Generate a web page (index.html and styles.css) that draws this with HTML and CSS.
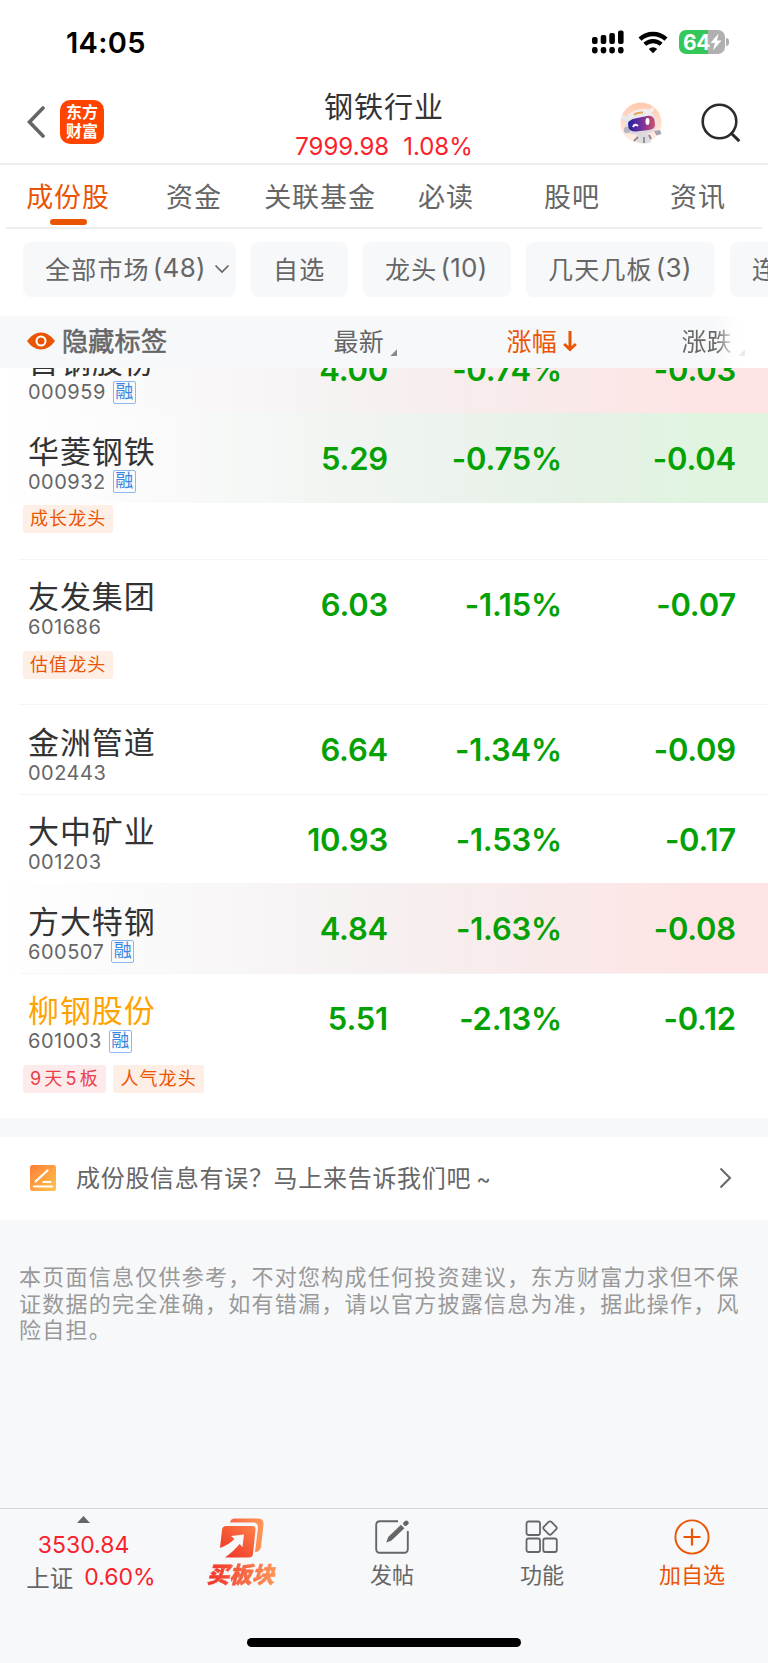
FILE: index.html
```
<!DOCTYPE html>
<html lang="zh-CN">
<head>
  <meta charset="UTF-8" />
  <meta name="viewport" content="width=device-width, initial-scale=1.0" />
  <title>钢铁行业</title>
  <link rel="stylesheet" href="styles.css">
</head>
<body>
  <div class="statusbar">
    <span class="clock">14:05</span>
    <div class="status-icons">
      <svg width="32" height="24" viewBox="0 0 32 24">
        <rect x="0" y="7" width="5.6" height="7" rx="2" />
        <rect x="8.7" y="5" width="5.6" height="9" rx="2" />
        <rect x="17.3" y="3" width="5.6" height="11" rx="2" />
        <rect x="26" y="0.5" width="5.6" height="13.5" rx="2" />
        <rect x="0" y="17" width="5.6" height="6.4" rx="2.4" />
        <rect x="8.7" y="17" width="5.6" height="6.4" rx="2.4" />
        <rect x="17.3" y="17" width="5.6" height="6.4" rx="2.4" />
        <rect x="26" y="17" width="5.6" height="6.4" rx="2.4" />
      </svg>
      <svg class="wifi" width="30" height="23" viewBox="0 0 30 23">
        <path d="M2 8.2a19 19 0 0 1 26 0" fill="none" stroke="#000" stroke-width="4.4" />
        <path d="M6.8 13.3a12 12 0 0 1 16.4 0" fill="none" stroke="#000" stroke-width="4.2" />
        <path d="M15 22.3l-4.2-4.4a6 6 0 0 1 8.4 0z" />
      </svg>
      <div class="battery">
        <span>64</span>
        <svg width="12" height="18" viewBox="0 0 12 18"><path d="M8.6 0.5L0.5 10h4.4L3 17.5 11.5 7.6H7z" fill="#fff" /></svg>
      </div>
      <i class="battery-tip"></i>
    </div>
  </div>

  <header class="navbar">
    <div class="nav-left">
      <svg width="18" height="32" viewBox="0 0 18 32"><path d="M16 2L2.5 16 16 30" fill="none" stroke="#666" stroke-width="3.6" stroke-linecap="round" /></svg>
      <div class="logo">东方<br>财富</div>
    </div>
    <div class="nav-title">
      <h1>钢铁行业</h1>
      <p><span>7999.98</span><span>1.08%</span></p>
    </div>
    <div class="nav-right">
      <svg width="42" height="42" viewBox="0 0 42 42">
        <defs>
          <linearGradient id="visor" x1="0" x2="1"><stop offset="0" stop-color="#2320a0" /><stop offset=".5" stop-color="#75309c" /><stop offset="1" stop-color="#d0506c" /></linearGradient>
          <linearGradient id="halo" x1="0" x2="0" y1="0" y2="1"><stop offset="0" stop-color="#ffc9ae" /><stop offset="1" stop-color="#fff0ea" /></linearGradient>
          <linearGradient id="shell" x1="0" x2="0" y1="0" y2="1"><stop offset="0" stop-color="#f6f5f6" /><stop offset="1" stop-color="#d9d6dc" /></linearGradient>
        </defs>
        <circle cx="21" cy="21" r="20.5" fill="url(#halo)" />
        <path d="M17 32h13l1 8q-7 3-14 0z" fill="#dedbe0" />
        <path d="M18 35l-4 4M24 35v6M29 33l2 4" stroke="#8d8992" stroke-width="1.8" />
        <path d="M1 15q1-3 4-1l2 1Q11 8 20 7.500q7-1 9 0 4-1 4-4l1 4q-1 3-3 3 6 5 6 13-1 7-13 8.500-13 2-17-3-3-4-2-10-3-1-4-4z" fill="url(#shell)" />
        <circle cx="7" cy="28" r="3.200" fill="#b9b5bf" />
        <path d="M34 29l6-1 1.500 4-5 1.500z" fill="#a9a5b0" />
        <path d="M14 12.500q5-2.500 9-2" fill="none" stroke="#e8a552" stroke-width="2" />
        <path d="M8 21q1-3 7-4.500l12-2.500q6-1 7.500 4l.5 5q0 4-6 5l-13 1.500q-6 .5-7.500-4z" fill="url(#visor)" />
        <path d="M13 25q2-4 5-1" fill="none" stroke="#fff" stroke-width="2" />
        <ellipse cx="27.500" cy="19.500" rx="2" ry="3.400" fill="#fff" />
      </svg>
      <svg width="40" height="40" viewBox="0 0 40 40"><circle cx="18.5" cy="18.5" r="16.8" fill="none" stroke="#2b2b2b" stroke-width="2.6" /><path d="M30.5 30.500l7.800 7.600" stroke="#2b2b2b" stroke-width="3" /></svg>
    </div>
  </header>

  <nav class="tabs">
    <a class="tab active">成份股</a>
    <a class="tab">资金</a>
    <a class="tab">关联基金</a>
    <a class="tab">必读</a>
    <a class="tab">股吧</a>
    <a class="tab">资讯</a>
  </nav>

  <div class="filters">
    <div class="chip chip-market">全部市场<b>(48)</b><svg width="16" height="10" viewBox="0 0 16 10"><path d="M1.5 1.5L8 8l6.500-6.500" fill="none" stroke="#666" stroke-width="1.700" /></svg></div>
    <div class="chip chip-own">自选</div>
    <div class="chip chip-lead">龙头<b>(10)</b></div>
    <div class="chip chip-days">几天几板<b>(3)</b></div>
    <div class="chip chip-more">连板</div>
  </div>

  <div class="table-head">
    <div class="toggle">
      <svg width="28" height="18" viewBox="0 0 28 18"><path d="M0 9Q6 0.500 14 0.500T28 9Q22 17.500 14 17.500T0 9z" fill="#ea5504" /><circle cx="14" cy="9" r="4.500" fill="#ea5504" stroke="#fff" stroke-width="2" /></svg>
      <span>隐藏标签</span>
    </div>
    <div class="col">最新<i class="corner"></i></div>
    <div class="col sorted">涨幅<svg width="14" height="21" viewBox="0 0 14 21"><path d="M7 0v18M1.200 13L7 18.500l5.800-5.500" fill="none" stroke="#ea5504" stroke-width="3" /></svg></div>
    <div class="col">涨跌<i class="corner"></i></div>
  </div>

  <main class="stocks">
    <div class="stock">
      <div class="quote up">
        <div class="who"><h2>首钢股份</h2><p>000959<em>融</em></p></div>
        <span>4.00</span><span>-0.74%</span><span>-0.03</span>
      </div>
    </div>
    <div class="stock">
      <div class="quote down">
        <div class="who"><h2>华菱钢铁</h2><p>000932<em>融</em></p></div>
        <span>5.29</span><span>-0.75%</span><span>-0.04</span>
      </div>
      <div class="tags"><b>成长龙头</b></div>
    </div>
    <div class="stock">
      <div class="quote">
        <div class="who"><h2>友发集团</h2><p>601686</p></div>
        <span>6.03</span><span>-1.15%</span><span>-0.07</span>
      </div>
      <div class="tags"><b>估值龙头</b></div>
    </div>
    <div class="stock">
      <div class="quote">
        <div class="who"><h2>金洲管道</h2><p>002443</p></div>
        <span>6.64</span><span>-1.34%</span><span>-0.09</span>
      </div>
    </div>
    <div class="stock">
      <div class="quote">
        <div class="who"><h2>大中矿业</h2><p>001203</p></div>
        <span>10.93</span><span>-1.53%</span><span>-0.17</span>
      </div>
    </div>
    <div class="stock">
      <div class="quote up">
        <div class="who"><h2>方大特钢</h2><p>600507<em>融</em></p></div>
        <span>4.84</span><span>-1.63%</span><span>-0.08</span>
      </div>
    </div>
    <div class="stock">
      <div class="quote">
        <div class="who own"><h2>柳钢股份</h2><p>601003<em>融</em></p></div>
        <span>5.51</span><span>-2.13%</span><span>-0.12</span>
      </div>
      <div class="tags"><b class="red">9天5板</b><b>人气龙头</b></div>
    </div>
  </main>

  <div class="feedback">
    <svg width="26" height="26" viewBox="0 0 26 26">
      <defs><linearGradient id="note" x1="0" y1="0" x2="1" y2="1"><stop offset="0" stop-color="#ff7e36" /><stop offset="1" stop-color="#ffc44f" /></linearGradient></defs>
      <rect width="26" height="26" rx="2.500" fill="url(#note)" />
      <path d="M5.500 16.500L17.500 5.500M4 21.500h18M13.500 17h7" fill="none" stroke="#fff" stroke-width="2.200" stroke-linecap="round" />
    </svg>
    <span>成份股信息有误？马上来告诉我们吧<small>~</small></span>
    <svg class="arrow" width="13" height="22" viewBox="0 0 13 22"><path d="M1.500 1.500L11 11 1.500 20.500" fill="none" stroke="#666" stroke-width="2" /></svg>
  </div>

  <p class="disclaimer">本页面信息仅供参考，不对您构成任何投资建议，东方财富力求但不保证数据的完全准确，如有错漏，请以官方披露信息为准，据此操作，风险自担。</p>

  <footer class="toolbar">
    <div class="index">
      <i class="caret"></i>
      <strong>3530.84</strong>
      <p>上证<strong>0.60%</strong></p>
    </div>
    <div class="tool buy">
      <svg width="44" height="40" viewBox="0 0 44 40">
        <defs>
          <linearGradient id="buyFront" x1="0" y1="1" x2="1" y2="0"><stop offset="0" stop-color="#ee2f26" /><stop offset="1" stop-color="#fd8148" /></linearGradient>
          <linearGradient id="buyBack" x1="0" x2="1"><stop offset="0" stop-color="#f76842" /><stop offset="1" stop-color="#ff9658" /></linearGradient>
        </defs>
        <path d="M10 4.500Q11 .500 14.500 .500H38q6 0 5.500 6L41 29q-1 5-6 5l3-24q0-5-4-5.500z" fill="url(#buyBack)" />
        <path d="M6 8h26q4 0 3.500 4L33 36q-.5 3.500-4 3.500H5Q14 33 19.500 26l3 3L24 16.500 11 18l3.500 3Q10 26 0 30L2 12q.5-4 4-4z" fill="url(#buyFront)" />
      </svg>
      <span>买板块</span>
    </div>
    <div class="tool">
      <svg width="36" height="36" viewBox="0 0 36 36">
        <path d="M24 2.200H6Q2.200 2.200 2.200 6v24q0 3.800 3.800 3.800h24q3.800 0 3.800-3.800V12" fill="none" stroke="#666" stroke-width="1.900" />
        <path d="M12.300 23.500l1.900-5.500L27 5.800l3.400 3.400L17.500 21.500z" fill="#666" />
        <path d="M31.500 4.700l.8-.8" stroke="#666" stroke-width="4.600" stroke-linecap="round" />
      </svg>
      <span>发帖</span>
    </div>
    <div class="tool">
      <svg width="36" height="36" viewBox="0 0 36 36" fill="none" stroke="#666" stroke-width="1.800">
        <rect x="2.500" y="2.500" width="13.500" height="13.500" rx="2" />
        <rect x="2.500" y="19.500" width="13.500" height="13.500" rx="2" />
        <rect x="19.300" y="19.500" width="13.500" height="13.500" rx="2" />
        <rect x="20.700" y="3.700" width="10.600" height="10.600" rx="2" transform="rotate(45 26 9)" />
      </svg>
      <span>功能</span>
    </div>
    <div class="tool add">
      <svg width="36" height="36" viewBox="0 0 36 36" fill="none" stroke="#ea5504" stroke-width="1.900"><circle cx="18" cy="18" r="16.600" /><path d="M18 9.500v17M9.500 18h17" stroke-width="2.200" /></svg>
      <span>加自选</span>
    </div>
  </footer>
  <div class="home-bar"></div>
</body>
</html>
```
FILE: styles.css
```
* {
  box-sizing: border-box;
}

body {
  display: flex;
  flex-direction: column;
  width: 768px;
  height: 1663px;
  margin: 0;
  overflow: hidden;
  background: #f7f8fa;
  color: #666;
  font-family: Inter, "Noto Sans CJK SC", sans-serif;
}

h1, h2, p {
  margin: 0;
  font-weight: 400;
}

svg {
  flex: none;
  display: block;
}

/* status bar */
.statusbar {
  display: flex;
  justify-content: space-between;
  align-items: center;
  height: 84px;
  padding: 0 39px 0 66px;
  background: #fff;
}

.clock {
  color: #000;
  font-size: 29px;
  font-weight: 600;
  letter-spacing: 0.3px;
}

.status-icons {
  display: flex;
  align-items: center;
}

.wifi {
  margin: 0 11px 0 14px;
}

.battery {
  display: flex;
  align-items: center;
  width: 46px;
  height: 24px;
  padding-left: 4px;
  border-radius: 7px;
  background: linear-gradient(90deg, #34c759 64%, #b0b0b0 64%);
  color: #fff;
  font-size: 21px;
  font-weight: 700;
  letter-spacing: -0.5px;
}

.battery-tip {
  width: 3px;
  height: 8px;
  margin-left: 1px;
  border-radius: 0 3px 3px 0;
  background: #b0b0b0;
}

/* title */
.navbar {
  display: grid;
  grid-template-columns: 200px 1fr 200px;
  flex: none;
  height: 81px;
  border-bottom: 2px solid #eee;
  background: #fff;
}

.nav-left {
  display: flex;
  align-items: center;
  gap: 15px;
  height: 76px;
  padding-left: 27px;
}

.logo {
  width: 44px;
  height: 44px;
  padding-top: 3px;
  border-radius: 10px;
  background: #ff4400;
  color: #fff;
  font-size: 16px;
  font-weight: 700;
  line-height: 18.5px;
  text-align: center;
}

.nav-title {
  padding-top: 2px;
  text-align: center;
}

.nav-title h1 {
  color: #333;
  font-size: 29px;
  line-height: 44px;
  letter-spacing: 1px;
}

.nav-title p {
  display: flex;
  justify-content: center;
  gap: 14px;
  color: #f9222b;
  font-size: 24px;
  line-height: 33px;
}

.nav-right {
  display: flex;
  align-items: center;
  justify-content: flex-end;
  gap: 39px;
  height: 78px;
  padding-right: 27px;
}

/* tabs */
.tabs {
  display: grid;
  grid-template-columns: repeat(6, 126px);
  flex: none;
  height: 64px;
  padding: 0 5px;
  background: linear-gradient(#eee, #eee) 6px 100% / 756px 2px no-repeat #fff;
}

.tab {
  display: flex;
  flex-direction: column;
  align-items: center;
  font-size: 27px;
  line-height: 54px;
  padding-top: 6px;
  letter-spacing: 0.9px;
  height: 60px;
}

.tab.active {
  color: #ea5504;
}

.tab.active::after {
  content: "";
  width: 37px;
  height: 6px;
  margin-top: -6px;
  flex: none;
  border-radius: 3px;
  background: #ea5504;
}

/* filter chips */
.filters {
  display: flex;
  flex: none;
  gap: 15px;
  height: 87px;
  padding: 12.5px 0 19px 22.5px;
  overflow: hidden;
  background: #fff;
}

.chip {
  display: flex;
  align-items: center;
  flex: none;
  height: 55px;
  padding: 0 0 3px 22.5px;
  border-radius: 8px;
  background: #f7f8fa;
  font-size: 25px;
  letter-spacing: 1.2px;
  white-space: nowrap;
}

.chip b {
  margin-left: 3px;
  font-size: 26px;
  font-weight: 400;
  letter-spacing: 0.3px;
  font-feature-settings: "calt" 0;
}

.chip svg {
  margin: 2px 0 0 8px;
}

.chip-market {
  width: 213px;
}

.chip-own {
  width: 97px;
}

.chip-lead {
  width: 148px;
}

.chip-days {
  width: 189px;
}

/* list head */
.table-head {
  display: grid;
  grid-template-columns: 213px 174px 174px 174px;
  flex: none;
  align-items: center;
  height: 51.5px;
  padding-bottom: 4px;
  background: linear-gradient(90deg, #f7f8fa 712px, #fff 740px);
  font-size: 25px;
}

.toggle {
  display: flex;
  align-items: center;
  gap: 7px;
  padding-left: 27px;
  font-size: 26px;
  letter-spacing: 0.3px;
  -webkit-text-stroke: 0.6px #666;
  white-space: nowrap;
}

.toggle svg {
  margin-top: 2px;
}

.col {
  display: flex;
  align-items: center;
  justify-content: flex-end;
  padding-right: 4px;
  letter-spacing: 0.3px;
}

.col:last-child {
  background: linear-gradient(90deg, #666 155px, #eee 173px);
  background-clip: text;
  color: transparent;
}

.corner {
  width: 7px;
  height: 7px;
  margin: 26px -14px 0 6px;
  background: #8a8a8a;
  clip-path: polygon(100% 0, 100% 100%, 0 100%);
}

.col:last-child .corner {
  background: #eaeaea;
}

.sorted {
  color: #ea5504;
  margin-right: -20px;
}

.sorted svg {
  margin: 3px 0 0 6px;
}

/* stocks */
.stocks {
  flex: none;
  height: 750.5px;
  overflow: hidden;
  background: #fff;
}

.stock {
  background: #fff;
}

.stock:first-child {
  margin-top: -44px;
}

.quote {
  display: grid;
  grid-template-columns: 213px 175px 174px 174px;
  height: 89.5px;
  background: linear-gradient(#f5f5f5, #f5f5f5) 19px 0 / 100% 1px no-repeat;
}

.quote.up {
  background: linear-gradient(90deg, #fff, #faf9fa 22%, #f6f0f0 50%, #f9eaea 70%, #fee4e4 92%);
}

.quote.down {
  background: linear-gradient(90deg, #fff, #f9faf9 22%, #eff4f0 50%, #e6f1e6 75%, #e0f4e0 92%);
}

.quote > span {
  color: #04a104;
  font-size: 31px;
  font-weight: 600;
  line-height: 91px;
  letter-spacing: -0.2px;
  text-align: right;
  font-feature-settings: "calt" 0;
}

.who {
  padding: 18.5px 0 0 28px;
}

.who h2 {
  color: #333;
  font-size: 31px;
  line-height: 40px;
  letter-spacing: 0.9px;
  white-space: nowrap;
}

.who.own h2 {
  color: #ffa300;
}

.who p {
  display: flex;
  align-items: center;
  height: 22px;
  margin-top: -1px;
  font-size: 20px;
  letter-spacing: 0.5px;
}

.who em {
  width: 23px;
  height: 23px;
  margin-left: 7px;
  border: 1.5px solid #8ab8f0;
  border-radius: 2px;
  color: #3a86e0;
  font-size: 18px;
  font-style: normal;
  line-height: 19px;
  letter-spacing: 0;
  text-align: center;
}

.tags {
  display: flex;
  gap: 7px;
  height: 56px;
  padding: 2.5px 0 0 22.5px;
}

.tags b {
  height: 28px;
  padding: 0 7px 0 7.5px;
  border-radius: 3px;
  background: #fdeee6;
  color: #ea5504;
  font-size: 18px;
  font-weight: 400;
  line-height: 28.5px;
  letter-spacing: 1.1px;
}

.tags .red {
  padding-right: 5px;
  background: #fdebec;
  color: #e8404a;
  letter-spacing: 3.2px;
}

/* feedback */
.feedback {
  display: flex;
  align-items: center;
  flex: none;
  height: 83px;
  margin-top: 18.5px;
  padding: 0 36px 0 30px;
  background: #fff;
  font-size: 24px;
  letter-spacing: 0.7px;
}

.feedback span {
  margin: -3px 0 0 20px;
}

.feedback small {
  margin-left: 5px;
  font-size: 22px;
}

.arrow {
  margin-left: auto;
}

.disclaimer {
  flex: 1;
  padding: 44.5px 20px 0 19px;
  color: #999;
  font-size: 22px;
  line-height: 26.600px;
  letter-spacing: 1.25px;
}

/* bottom toolbar */
.toolbar {
  display: grid;
  grid-template-columns: 167px repeat(4, 150px);
  flex: none;
  height: 130px;
  border-top: 1px solid #d5d6d8;
  font-size: 22px;
}

.index {
  display: flex;
  flex-direction: column;
  align-items: center;
  padding-top: 7px;
}

.index strong {
  color: #f9222b;
  font-size: 23px;
  font-weight: 400;
  line-height: 44px;
}

.index p {
  display: flex;
  align-items: center;
  gap: 11px;
  margin: -3px 0 0 15px;
  height: 26px;
  font-size: 23.5px;
}

.caret {
  width: 13px;
  height: 7px;
  background: #666;
  clip-path: polygon(50% 0, 100% 100%, 0 100%);
}

.tool {
  display: flex;
  flex-direction: column;
  align-items: center;
  padding-top: 10px;
}

.tool span {
  margin-top: 4px;
  line-height: 32px;
}

.add {
  color: #ea5504;
}

.buy {
  padding-top: 9px;
}

.tool.buy span {
  margin-top: 1px;
  padding: 0 5px 0 2px;
  background: linear-gradient(90deg, #ee2f26, #ff9a5a);
  background-clip: text;
  color: transparent;
  font-size: 22.5px;
  font-style: italic;
  font-weight: 900;
  -webkit-text-stroke: 0.5px transparent;
}

.home-bar {
  flex: none;
  align-self: center;
  width: 274px;
  height: 9px;
  margin-bottom: 16px;
  border-radius: 5px;
  background: #000;
}
```
